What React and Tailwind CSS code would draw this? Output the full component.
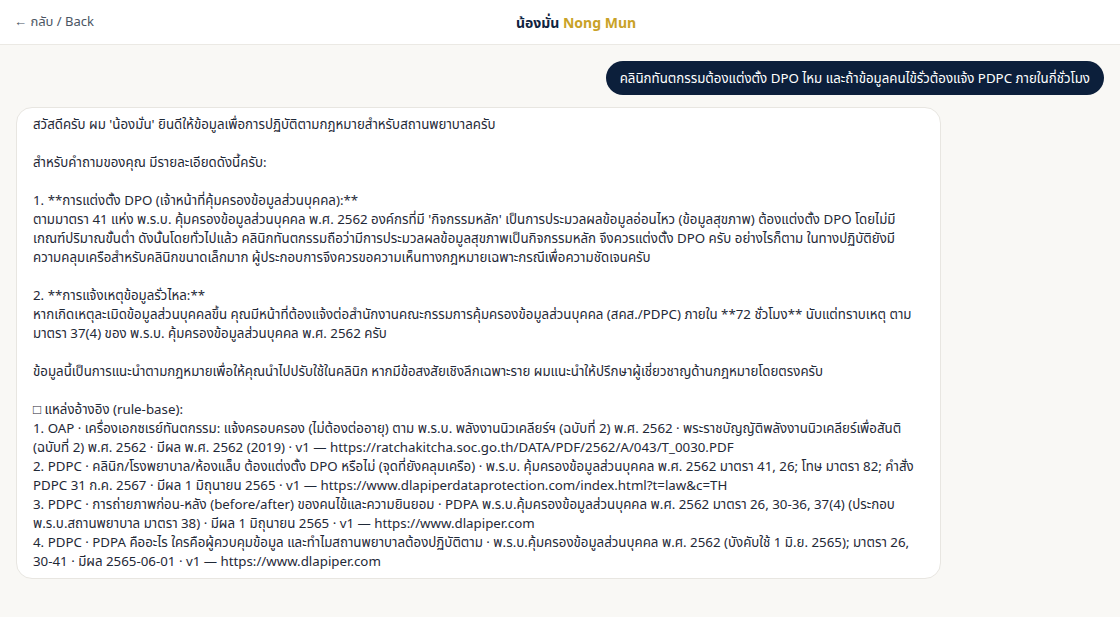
import React from 'react';

const answer = `สวัสดีครับ ผม 'น้องมั่น' ยินดีให้ข้อมูลเพื่อการปฏิบัติตามกฎหมายสำหรับสถานพยาบาลครับ

สำหรับคำถามของคุณ มีรายละเอียดดังนี้ครับ:

1. **การแต่งตั้ง DPO (เจ้าหน้าที่คุ้มครองข้อมูลส่วนบุคคล):**
ตามมาตรา 41 แห่ง พ.ร.บ. คุ้มครองข้อมูลส่วนบุคคล พ.ศ. 2562 องค์กรที่มี 'กิจกรรมหลัก' เป็นการประมวลผลข้อมูลอ่อนไหว (ข้อมูลสุขภาพ) ต้องแต่งตั้ง DPO โดยไม่มีเกณฑ์ปริมาณขั้นต่ำ ดังนั้นโดยทั่วไปแล้ว คลินิกทันตกรรมถือว่ามีการประมวลผลข้อมูลสุขภาพเป็นกิจกรรมหลัก จึงควรแต่งตั้ง DPO ครับ อย่างไรก็ตาม ในทางปฏิบัติยังมีความคลุมเครือสำหรับคลินิกขนาดเล็กมาก ผู้ประกอบการจึงควรขอความเห็นทางกฎหมายเฉพาะกรณีเพื่อความชัดเจนครับ

2. **การแจ้งเหตุข้อมูลรั่วไหล:**
หากเกิดเหตุละเมิดข้อมูลส่วนบุคคลขึ้น คุณมีหน้าที่ต้องแจ้งต่อสำนักงานคณะกรรมการคุ้มครองข้อมูลส่วนบุคคล (สคส./PDPC) ภายใน **72 ชั่วโมง** นับแต่ทราบเหตุ ตามมาตรา 37(4) ของ พ.ร.บ. คุ้มครองข้อมูลส่วนบุคคล พ.ศ. 2562 ครับ

ข้อมูลนี้เป็นการแนะนำตามกฎหมายเพื่อให้คุณนำไปปรับใช้ในคลินิก หากมีข้อสงสัยเชิงลึกเฉพาะราย ผมแนะนำให้ปรึกษาผู้เชี่ยวชาญด้านกฎหมายโดยตรงครับ

\u25A1 แหล่งอ้างอิง (rule-base):
1. OAP · เครื่องเอกซเรย์ทันตกรรม: แจ้งครอบครอง (ไม่ต้องต่ออายุ) ตาม พ.ร.บ. พลังงานนิวเคลียร์ฯ (ฉบับที่ 2) พ.ศ. 2562 · พระราชบัญญัติพลังงานนิวเคลียร์เพื่อสันติ (ฉบับที่ 2) พ.ศ. 2562 · มีผล พ.ศ. 2562 (2019) · v1 — https://ratchakitcha.soc.go.th/DATA/PDF/2562/A/043/T_0030.PDF
2. PDPC · คลินิก/โรงพยาบาล/ห้องแล็บ ต้องแต่งตั้ง DPO หรือไม่ (จุดที่ยังคลุมเครือ) · พ.ร.บ. คุ้มครองข้อมูลส่วนบุคคล พ.ศ. 2562 มาตรา 41, 26; โทษ มาตรา 82; คำสั่ง PDPC 31 ก.ค. 2567 · มีผล 1 มิถุนายน 2565 · v1 — https://www.dlapiperdataprotection.com/index.html?t=law&c=TH
3. PDPC · การถ่ายภาพก่อน-หลัง (before/after) ของคนไข้และความยินยอม · PDPA พ.ร.บ.คุ้มครองข้อมูลส่วนบุคคล พ.ศ. 2562 มาตรา 26, 30-36, 37(4) (ประกอบ พ.ร.บ.สถานพยาบาล มาตรา 38) · มีผล 1 มิถุนายน 2565 · v1 — https://www.dlapiper.com
4. PDPC · PDPA คืออะไร ใครคือผู้ควบคุมข้อมูล และทำไมสถานพยาบาลต้องปฏิบัติตาม · พ.ร.บ.คุ้มครองข้อมูลส่วนบุคคล พ.ศ. 2562 (บังคับใช้ 1 มิ.ย. 2565); มาตรา 26, 30-41 · มีผล 2565-06-01 · v1 — https://www.dlapiper.com`;

export default function App() {
  return (
    <div
      className="min-h-screen bg-[#f9f8f5] text-[#1f2937]"
      style={{ fontFamily: '"Noto Sans", "Noto Sans Thai", "Liberation Sans", sans-serif' }}
    >
      {/* header */}
      <div className="relative flex h-[45px] items-center border-b border-[#ebe9e4] bg-white px-4">
        <span className="-ml-[2px] text-[13px] text-[#4b5563]">← กลับ / Back</span>
        <div className="absolute left-[calc(50%+16px)] -translate-x-1/2 text-[14px] font-bold">
          <span className="text-[#0f2340]">น้องมั่น</span>{' '}
          <span className="text-[#c9a227]">Nong Mun</span>
        </div>
      </div>

      {/* chat */}
      <div className="flex flex-col gap-3 p-4">
        <div className="flex justify-end">
          <div className="max-w-[85%] rounded-[18px] bg-[#0c1f3b] px-[14px] py-[7px] text-[13.3px] leading-[20px] text-white">
            คลินิกทันตกรรมต้องแต่งตั้ง DPO ไหม และถ้าข้อมูลคนไข้รั่วต้องแจ้ง PDPC ภายในกี่ชั่วโมง
          </div>
        </div>

        <div className="flex justify-start">
          <div className="max-w-[85%] whitespace-pre-wrap rounded-2xl border border-[#e8e6e1] bg-white py-[7px] pl-4 pr-[22px] text-[13.3px] leading-[19px] text-[#1f2937]">
            {answer}
          </div>
        </div>
      </div>
    </div>
  );
}
